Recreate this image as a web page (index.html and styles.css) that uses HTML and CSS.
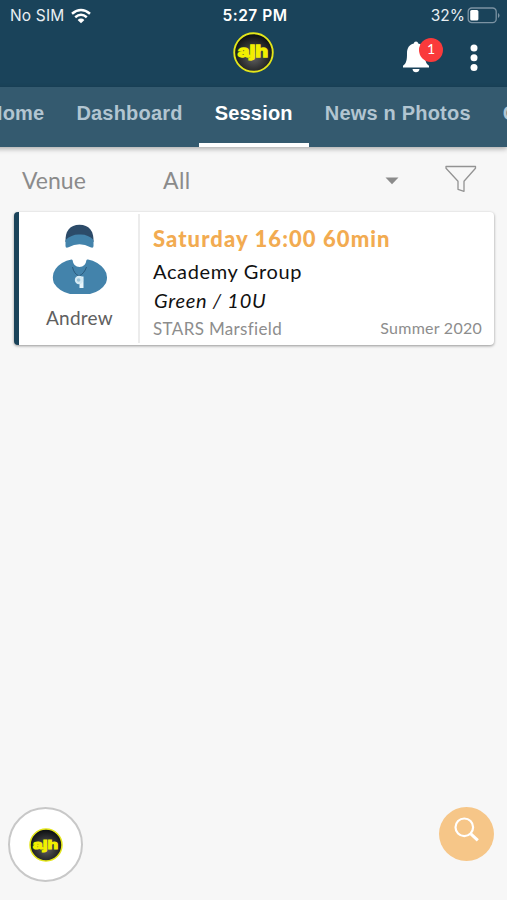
FILE: index.html
```html
<!DOCTYPE html>
<html lang="en">
<head>
<meta charset="utf-8">
<title>Session</title>
<link rel="stylesheet" href="styles.css">
</head>
<body>
<svg width="0" height="0" class="defs" aria-hidden="true">
  <defs>
    <radialGradient id="disc" cx=".5" cy=".6" r=".55"><stop offset="0" stop-color="#666"/><stop offset=".55" stop-color="#343536"/><stop offset="1" stop-color="#101214"/></radialGradient>
    <symbol id="logo" viewBox="0 0 40 40">
      <circle cx="20" cy="20" r="18.8" fill="url(#disc)" stroke="#e4e61a" stroke-width="1.8"/>
      <text transform="translate(19.500 24.500) scale(1.280 .95)" text-anchor="middle" class="logo-text">ajh</text>
    </symbol>
  </defs>
</svg>
<div class="app">
  <header class="header">
    <div class="status">
      <div class="carrier"><span>No SIM</span>
        <svg width="20" height="16" viewBox="0 0 20 16" fill="none" stroke="#fff" stroke-width="2.5"><path d="M1 5.8Q10-1.8 19 5.8M4.2 9.3Q10 4.3 15.8 9.3"/><path d="M6.6 11.9Q10 9 13.4 11.9L10 15.2Z" fill="#fff" stroke="none"/></svg>
      </div>
      <div class="clock">5:27 PM</div>
      <div class="power"><span>32%</span>
        <svg width="33" height="17" viewBox="0 0 33 17"><rect x="1.2" y="1" width="28" height="14.6" rx="3.6" fill="none" stroke="#7c93a3" stroke-width="1.3"/><rect x="3.2" y="3" width="8.2" height="10.6" rx="1.5" fill="#fff"/><path d="M31 6v5q1.5-.8 1.5-2.5T31 6" fill="#7c93a3"/></svg>
      </div>
    </div>
    <div class="bar">
      <svg class="brand" width="41" height="41"><use href="#logo"/></svg>
      <div class="bell">
        <svg width="28" height="32" viewBox="0 0 28 32" fill="#fff"><path d="M14 .5Q16 .5 16.2 2.6C20.8 3.6 23 7.2 23 12.2C23 19 23.5 22 27 24.8V26.5H1V24.8C4.500 22 5 19 5 12.200C5 7.200 7.200 3.600 11.800 2.600Q12 .5 14 .5M10.500 28H17.500Q17 31.300 14 31.300T10.500 28"/></svg>
        <span class="count">1</span>
      </div>
      <svg class="more" width="8" height="28" viewBox="0 0 8 28" fill="#fff"><circle cx="4" cy="4" r="3.500"/><circle cx="4" cy="13.800" r="3.500"/><circle cx="4" cy="23.600" r="3.500"/></svg>
    </div>
  </header>
  <nav class="tabs"><a>Home</a><a>Dashboard</a><a class="active">Session</a><a>News n Photos</a><a>Calendar</a></nav>
  <section class="filters">
    <span class="label">Venue</span><span class="value">All</span>
    <svg class="caret" width="14" height="8" viewBox="0 0 14 8"><path d="M.5.5H13.500L7 7.300Z" fill="#8b8b8b"/></svg>
    <svg class="funnel" width="32" height="28" viewBox="0 0 32 28" fill="none" stroke="#939393" stroke-width="1.300" stroke-linejoin="round"><path d="M1 1.500H30.500V3.300L19 16.200V26.300L13 24.300V16.200L1 3.300Z"/></svg>
  </section>
  <article class="card">
    <div class="coach">
      <svg width="56" height="71" viewBox="0 0 56 71">
        <path d="M19.500 35.500Q9 37.500 3.500 45Q-.8 51 1.800 59Q7 67.500 18 70H38Q49 67.500 54 59Q56.800 51 52 45Q46 37.500 36 35.500Z" fill="#4383ab"/>
        <path d="M15 23H40Q39.500 31 34.500 36Q33.500 43 27.500 43T20.500 36Q15.500 31 15 23Z" fill="#fff"/>
        <path d="M13.500 18Q13 1 27.500 .8Q42 1 41.500 18Z" fill="#2c4b69"/>
        <path d="M13.500 16Q20 10 27.500 10.500Q36 10 41.500 16V22Q41.500 24.500 38.500 23.300Q27.500 17 16.500 23.300Q13.500 24.500 13.500 22Z" fill="#4383ab"/>
        <path d="M20.500 43Q22 50 27 52Q32 50 34.500 43" fill="none" stroke="#29587a" stroke-width="1"/>
        <path d="M27.500 52.500H31.500V64H27.500Z" fill="#e8f5fb"/><circle cx="27" cy="56" r="4.200" fill="#d4eaf4"/><circle cx="26.600" cy="56" r="1.800" fill="#9dc4d9"/>
      </svg>
      <span class="name">Andrew</span>
    </div>
    <div class="details">
      <h2>Saturday 16:00 60min</h2>
      <p class="group">Academy Group</p>
      <p class="level">Green / 10U</p>
      <div class="foot"><span class="place">STARS Marsfield</span><span class="term">Summer 2020</span></div>
    </div>
  </article>
  <footer class="actions">
    <button class="home" aria-label="Home"><svg width="34" height="34"><use href="#logo"/></svg></button>
    <button class="search" aria-label="Search"><svg width="26" height="26" viewBox="0 0 26 26" fill="none" stroke="#fff" stroke-width="2.200"><circle cx="10.300" cy="10.300" r="8.800"/><path d="M16.800 16.800L23.800 23.400" stroke-width="3"/></svg></button>
  </footer>
</div>
</body>
</html>
```
FILE: styles.css
```css
* { box-sizing: border-box; }
body { margin: 0; background: #f7f7f7; font-family: Lato, sans-serif; overflow: hidden; }
svg { display: block; flex: none; }
.defs { position: absolute; }
.app { width: 507px; height: 900px; display: flex; flex-direction: column; overflow: hidden; }
.logo-text { font: 700 16px "Liberation Sans", sans-serif; fill: #f2ef00; stroke: #f2ef00; stroke-width: 1.4px; }

.header { height: 87px; background: #1a435a; color: #e9eff3; flex: none; }
.status { height: 30px; display: grid; grid-template-columns: 1fr auto 1fr; align-items: center; padding: 0 7px 0 10px; font: 500 15.500px/30px Inter, sans-serif; }
.carrier, .power { display: flex; align-items: center; }
.carrier { gap: 7px; font-weight: 400; letter-spacing: .15px; }
.clock { font-weight: 600; color: #fff; letter-spacing: .5px; }
.status span, .clock { padding-top: 1px; }
.power { justify-content: flex-end; gap: 2px; font-weight: 400; }
.bar { height: 57px; display: grid; grid-template-columns: 1fr 41px 1fr; padding-top: 2px; position: relative; }
.brand { grid-column: 2; }
.bell { position: absolute; left: 402px; top: 11px; }
.count { position: absolute; left: 17px; top: -3px; width: 24px; height: 24px; border-radius: 50%; background: #fa3a3b; color: #fff; text-align: center; font: 14px/22px Lato, sans-serif; }
.more { position: absolute; left: 470px; top: 14px; }

.tabs { height: 60px; flex: none; background: #345a6f; display: flex; margin-left: -28px; box-shadow: 0 2px 5px rgba(0,0,0,.3); white-space: nowrap; z-index: 1; }
.tabs a { flex: none; padding: 0 16px; font: 700 20px/52px "Liberation Sans", sans-serif; letter-spacing: .2px; color: #b2c5d1; }
.tabs .active { color: #fff; border-bottom: 4px solid #fff; }

.filters { height: 65px; flex: none; display: grid; grid-template-columns: 141px 222px 60px 1fr; align-items: center; padding: 1px 0 0 22px; color: #8b8b8b; font-size: 23px; line-height: 30px; }
.value { letter-spacing: .4px; }
.caret { margin-top: 2px; }
.funnel { margin-top: -3px; }

.card { height: 133px; margin: 0 13px 0 14px; flex: none; display: flex; background: #fff; border-left: 5px solid #1a435a; border-radius: 4px; box-shadow: 0 1px 3px rgba(0,0,0,.4); }
.coach { width: 121px; margin: 2px 0; border-right: 2px solid #ececec; display: flex; flex-direction: column; align-items: center; padding: 10px 0 0 2px; }
.name { font-size: 19px; line-height: 24px; letter-spacing: .25px; color: #606060; margin-top: 11px; }
.details { flex: 1; padding: 12px 12px 0 13px; }
h2, p { margin: 0; }
h2 { font: 900 22px/29px Lato, sans-serif; letter-spacing: 1.080px; color: #f2ab51; }
.group { font-size: 20px; line-height: 30px; margin-top: 3px; letter-spacing: .65px; color: #111; }
.level { font-size: 20px; line-height: 29px; letter-spacing: .75px; padding-left: 1px; color: #111; font-style: italic; }
.foot { display: flex; justify-content: space-between; margin-top: 1px; font-size: 17px; line-height: 26px; color: #8d8d8d; }
.place { letter-spacing: .35px; }
.term { font-size: 16px; line-height: 24px; letter-spacing: .25px; }

.actions { margin-top: auto; display: flex; justify-content: space-between; padding: 0 13px 18px 8px; }
button { border: 0; padding: 0; border-radius: 50%; display: flex; align-items: center; justify-content: center; }
.home { width: 75px; height: 75px; background: #fff; border: 2px solid #c8c8c8; }
.search { width: 55px; height: 54px; background: #f6c688; padding-bottom: 8px; }
```
